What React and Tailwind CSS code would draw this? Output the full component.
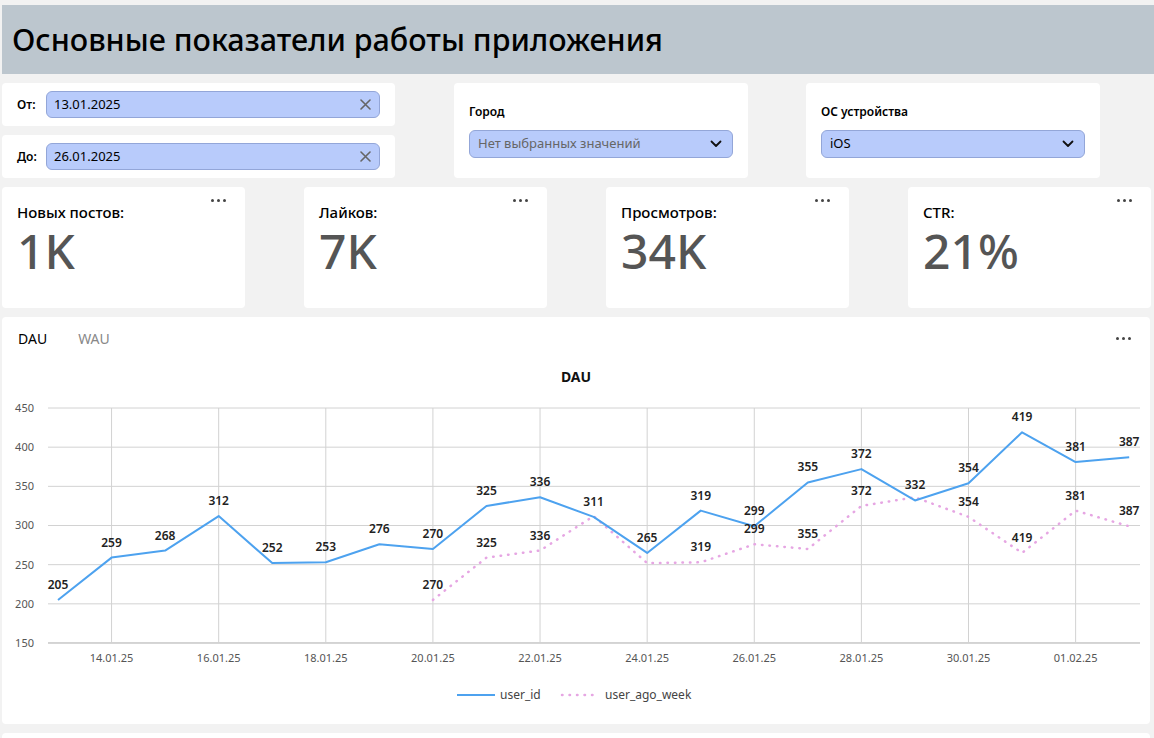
import React from "react";

const font = { fontFamily: '"Noto Sans", "Open Sans", sans-serif' };

const dates = ["14.01.25", "16.01.25", "18.01.25", "20.01.25", "22.01.25", "24.01.25", "26.01.25", "28.01.25", "30.01.25", "01.02.25"];
const dau = [205, 259, 268, 312, 252, 253, 276, 270, 325, 336, 311, 265, 319, 299, 355, 372, 332, 354, 419, 381, 387];
const agoLabels = [7, 8, 9, 12, 13, 14, 15, 17, 18, 19, 20];

const px = (i) => 58 + 53.56 * i;
const py = (v) => 408 + (450 - v) * 0.78333;

const Dots = () => (
  <div className="flex gap-[3px] items-center">
    <span className="w-[3px] h-[3px] rounded-full bg-[#444]" />
    <span className="w-[3px] h-[3px] rounded-full bg-[#444]" />
    <span className="w-[3px] h-[3px] rounded-full bg-[#444]" />
  </div>
);

const CloseIcon = () => (
  <svg width="11" height="11" viewBox="0 0 11 11">
    <path d="M1 1L10 10M10 1L1 10" stroke="#666" strokeWidth="1.6" strokeLinecap="round" />
  </svg>
);

const Chevron = () => (
  <svg width="12" height="8" viewBox="0 0 12 8">
    <path d="M1.5 1.5L6 6L10.5 1.5" stroke="#111" strokeWidth="1.8" fill="none" strokeLinecap="round" strokeLinejoin="round" />
  </svg>
);

const DateCard = ({ label, value }) => (
  <div className="h-[43px] shrink-0 bg-white rounded-[4px] flex items-center pl-[15px] pr-[15px]">
    <span className="text-[12px] font-semibold text-black w-[29px]">{label}</span>
    <div className="flex-1 h-[27px] bg-[#b8cbfb] border border-[#93a6d8] rounded-[6px] flex items-center justify-between pl-[7px] pr-[8px]">
      <span className="text-[13px] text-black">{value}</span>
      <CloseIcon />
    </div>
  </div>
);

const SelectCard = ({ label, value, muted }) => (
  <div className="w-[294px] h-[95px] bg-white rounded-[4px] pl-[15px] pr-[15px] pt-[21px]">
    <div className="text-[12px] font-semibold text-black leading-[16px]">{label}</div>
    <div className="mt-[10px] h-[28px] bg-[#b8cbfb] border border-[#93a6d8] rounded-[6px] flex items-center justify-between pl-[8px] pr-[10px]">
      <span className={muted ? "text-[13px] text-[#666]" : "text-[13px] text-black"}>{value}</span>
      <Chevron />
    </div>
  </div>
);

const Kpi = ({ title, value }) => (
  <div className="w-[243px] h-[121px] bg-white rounded-[4px] relative pl-[15px] pt-[15px]">
    <div className="absolute right-[19px] top-[12px]">
      <Dots />
    </div>
    <div className="text-[15px] font-medium text-black leading-[20px]">{title}</div>
    <div className="text-[48px] font-medium text-[#555] leading-[48px] mt-[5px]">{value}</div>
  </div>
);

const Chart = () => {
  const grid = [450, 400, 350, 300, 250, 200, 150];
  const line = dau.map((v, i) => `${px(i)},${py(v)}`).join(" ");
  const ago = dau.slice(0, 14).map((v, k) => `${px(k + 7)},${py(v)}`).join(" ");
  return (
    <svg width="1148" height="365" viewBox="2 359 1148 365" style={font}>
      <text x="576" y="382" textAnchor="middle" fontSize="14" fontWeight="700" fill="#111">DAU</text>
      {grid.map((g) => (
        <g key={g}>
          <line x1="48" x2="1140" y1={py(g)} y2={py(g)} stroke={g === 150 ? "#aaa" : "#d2d2d2"} strokeWidth="1" />
          <text x="34" y={py(g) + 4} textAnchor="end" fontSize="11" fill="#555">{g}</text>
        </g>
      ))}
      {dates.map((d, k) => (
        <g key={d}>
          <line x1={px(1 + 2 * k)} x2={px(1 + 2 * k)} y1="408" y2="643" stroke="#d2d2d2" strokeWidth="1" />
          <text x={px(1 + 2 * k)} y="662" textAnchor="middle" fontSize="11" fill="#555">{d}</text>
        </g>
      ))}
      <polyline points={ago} fill="none" stroke="#e6a6e3" strokeWidth="2.5" strokeDasharray="0.5 7" strokeLinecap="round" />
      <polyline points={line} fill="none" stroke="#4da2ef" strokeWidth="2" strokeLinejoin="round" />
      {dau.map((v, i) => (
        <text key={i} x={px(i)} y={py(v) - 11} textAnchor="middle" fontSize="12" fontWeight="600" fill="#222">{v}</text>
      ))}
      {agoLabels.map((i) => (
        <text key={"a" + i} x={px(i)} y={py(dau[i - 7]) - 11} textAnchor="middle" fontSize="12" fontWeight="600" fill="#222">{dau[i]}</text>
      ))}
      <line x1="457" x2="495" y1="695" y2="695" stroke="#4da2ef" strokeWidth="2" />
      <text x="500" y="699" fontSize="12" fill="#444">user_id</text>
      <line x1="562" x2="598" y1="695" y2="695" stroke="#e6a6e3" strokeWidth="2.5" strokeDasharray="0.5 7" strokeLinecap="round" />
      <text x="605" y="699" fontSize="12" fill="#444">user_ago_week</text>
    </svg>
  );
};

export default function App() {
  return (
    <div className="w-[1154px] h-[738px] overflow-hidden bg-[#f2f2f2] pt-[5px] pl-[2px] flex flex-col gap-[9px]" style={font}>
      <div className="h-[69px] shrink-0 bg-[#bcc6ce] flex items-center pl-[10px]">
        <h1 className="text-[30.5px] font-medium text-black leading-none">Основные показатели работы приложения</h1>
      </div>

      <div className="flex shrink-0">
        <div className="w-[393px] flex flex-col gap-[9px]">
          <DateCard label="От:" value="13.01.2025" />
          <DateCard label="До:" value="26.01.2025" />
        </div>
        <div className="ml-[59px]">
          <SelectCard label="Город" value="Нет выбранных значений" muted />
        </div>
        <div className="ml-[58px]">
          <SelectCard label="ОС устройства" value="iOS" />
        </div>
      </div>

      <div className="flex shrink-0 gap-[59px]">
        <Kpi title="Новых постов:" value="1K" />
        <Kpi title="Лайков:" value="7K" />
        <Kpi title="Просмотров:" value="34K" />
        <Kpi title="CTR:" value="21%" />
      </div>

      <div className="w-[1148px] h-[407px] shrink-0 bg-white rounded-[4px] relative">
        <div className="h-[42px] flex items-center gap-[31px] pl-[16px]">
          <span className="text-[14px] text-black">DAU</span>
          <span className="text-[14px] text-[#888]">WAU</span>
        </div>
        <div className="absolute right-[19px] top-[20px]">
          <Dots />
        </div>
        <Chart />
      </div>

      <div className="w-[1148px] h-[40px] shrink-0 bg-white rounded-[4px]" />
    </div>
  );
}
